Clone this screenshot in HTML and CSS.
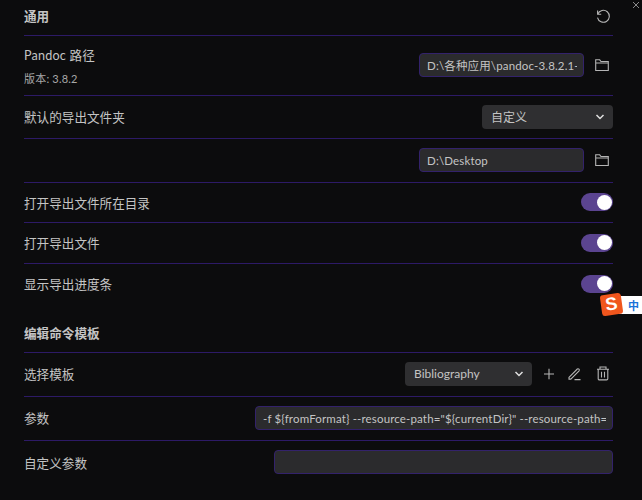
FILE: index.html
```html
<!DOCTYPE html>
<html lang="zh-CN">
<head>
    <meta charset="UTF-8">
    <meta name="viewport" content="width=device-width, initial-scale=1.0">
    <title>导出设置</title>
    <link rel="stylesheet" href="styles.css">
</head>
<body>
    <svg class="close-x" width="8" height="8" viewBox="0 0 8 8"><path d="M1 1l6 6M7 1l-6 6"/></svg>

    <div class="settings">
        <div class="row heading first-heading">
            <span>通用</span>
            <svg class="icon reset-icon" width="16" height="16" viewBox="0 0 16 16"><path d="M2.6 2.6v3.6h3.6"/><path d="M2.8 6a6 6 0 1 1-.3 3.6"/></svg>
        </div>

        <div class="row pandoc-row">
            <div class="label-stack">
                <span>Pandoc 路径</span>
                <span class="sub">版本: 3.8.2</span>
            </div>
            <div class="controls">
                <div class="field path-field"><div class="field-text">D:\各种应用\pandoc-3.8.2.1-windows</div></div>
                <svg class="icon" width="16" height="16" viewBox="0 0 16 16"><path d="M1.7 13.5V2.8h4l1.3 1.7h7.3v9zM1.7 6h12.6"/></svg>
            </div>
        </div>

        <div class="row select-row">
            <span>默认的导出文件夹</span>
            <div class="select custom-select">自定义
                <svg class="chevron" width="10" height="6" viewBox="0 0 10 6"><path d="M1.5 1l3.5 3.5L8.5 1"/></svg>
            </div>
        </div>

        <div class="row folder-row">
            <span></span>
            <div class="controls">
                <div class="field path-field"><div class="field-text">D:\Desktop</div></div>
                <svg class="icon" width="16" height="16" viewBox="0 0 16 16"><path d="M1.7 13.5V2.8h4l1.3 1.7h7.3v9zM1.7 6h12.6"/></svg>
            </div>
        </div>

        <div class="row toggle-row">
            <span>打开导出文件所在目录</span>
            <div class="toggle"><div class="knob"></div></div>
        </div>
        <div class="row toggle-row tall">
            <span>打开导出文件</span>
            <div class="toggle"><div class="knob"></div></div>
        </div>
        <div class="row toggle-row tall no-line">
            <span>显示导出进度条</span>
            <div class="toggle"><div class="knob"></div></div>
        </div>

        <div class="row heading second-heading">
            <span>编辑命令模板</span>
        </div>

        <div class="row select-row tmpl-row">
            <span>选择模板</span>
            <div class="controls tmpl-controls">
                <div class="select tmpl-select">Bibliography
                    <svg class="chevron" width="10" height="6" viewBox="0 0 10 6"><path d="M1.5 1l3.5 3.5L8.5 1"/></svg>
                </div>
                <svg class="icon" width="10" height="12" viewBox="0 0 10 12"><path d="M5 .8v10.4M0 6h10"/></svg>
                <svg class="icon" width="15" height="15" viewBox="0 0 15 15"><path d="M3 11.3L11.3 3a1.3 1.3 0 0 1 1.8 1.8L4.8 13.1H3zM8.5 13.6h6"/></svg>
                <svg class="icon" width="16" height="15" viewBox="0 0 16 15"><path d="M4 3.2h12M7 3V1h6v2M5.2 3.2v9.5a1.2 1.2 0 0 0 1.2 1.2h7.2a1.2 1.2 0 0 0 1.2-1.2V3.2M8.5 5.8v5.6M11.5 5.8v5.6"/></svg>
            </div>
        </div>

        <div class="row args-row">
            <span>参数</span>
            <div class="field args-field"><div class="field-text">-f ${fromFormat} --resource-path="${currentDir}" --resource-path="${currentDir}/assets"</div></div>
        </div>

        <div class="row args-row no-line">
            <span>自定义参数</span>
            <div class="field custom-field"></div>
        </div>
    </div>

    <div class="ime-badge">
        <span class="ime-text">中</span>
        <div class="ime-logo">S</div>
    </div>
</body>
</html>
```

FILE: styles.css
```css
body {
    margin: 0;
    height: 500px;
    overflow: hidden;
    background-color: #0c0c0d;
    color: #c4c4c4;
    font-family: "Lato", "Noto Sans CJK SC", sans-serif;
    font-size: 12.6px;
}

.settings {
    padding: 0 29px 0 24px;
}

.row {
    display: flex;
    justify-content: space-between;
    align-items: center;
    box-sizing: border-box;
    padding-bottom: 1px;
    border-bottom: 1px solid #2d1a66;
}

.no-line {
    border-bottom: none;
    padding-bottom: 2px;
}

.heading {
    font-weight: 700;
    font-size: 12.6px;
}

.first-heading {
    height: 36px;
    padding-bottom: 4px;
}

.second-heading {
    height: 48px;
    padding-top: 8px;
}

.pandoc-row {
    height: 60px;
}

.select-row {
    height: 43px;
}

.folder-row {
    height: 44px;
}

.toggle-row {
    height: 40px;
}

.tall {
    height: 41px;
}

.tmpl-row {
    height: 44px;
    padding-bottom: 2px;
}

.args-row {
    height: 44px;
    padding-bottom: 2px;
}

.label-stack {
    display: flex;
    flex-direction: column;
    gap: 6px;
    letter-spacing: 0.2px;
}

.sub {
    font-size: 11px;
    color: #a8a8a8;
}

.controls {
    display: flex;
    align-items: center;
    gap: 10px;
    margin-right: 3px;
}

.icon {
    fill: none;
    stroke: #b5b5b5;
    stroke-width: 1.1;
}

.reset-icon {
    margin-right: 2px;
}

.field {
    box-sizing: border-box;
    height: 24px;
    line-height: 23px;
    padding: 0 6px 0 7px;
    background-color: #2b2b2d;
    border: 1px solid #33226b;
    border-radius: 4px;
    font-size: 11.5px;
    letter-spacing: 0.15px;
}

.field-text {
    white-space: nowrap;
    overflow: hidden;
}

.path-field {
    width: 165px;
}

.args-field {
    width: 358px;
}

.custom-field {
    width: 339px;
}

.select {
    box-sizing: border-box;
    display: flex;
    justify-content: space-between;
    align-items: center;
    height: 24px;
    padding: 0 8px 0 9px;
    background-color: #2f2f31;
    border-radius: 4px;
    font-size: 12px;
}

.custom-select {
    width: 131px;
}

.tmpl-select {
    width: 127px;
}

.tmpl-controls {
    gap: 12px;
    margin-right: 4px;
}

.chevron {
    fill: none;
    stroke: #e0e0e0;
    stroke-width: 1.5;
}

.toggle {
    display: flex;
    justify-content: flex-end;
    align-items: center;
    box-sizing: border-box;
    width: 32px;
    height: 18px;
    padding: 0 1px;
    border-radius: 9px;
    background-color: #5b4490;
}

.knob {
    width: 15px;
    height: 15px;
    border-radius: 50%;
    background-color: #fff;
}

.close-x {
    position: absolute;
    top: 1px;
    right: 2px;
    fill: none;
    stroke: #8a8a8a;
    stroke-width: 1;
}

.ime-badge {
    position: absolute;
    left: 618px;
    top: 296px;
    width: 24px;
    height: 18px;
    background-color: #fff;
    display: flex;
    justify-content: flex-end;
    align-items: center;
}

.ime-logo {
    position: absolute;
    left: -17px;
    top: -2px;
    width: 21px;
    height: 21px;
    background-color: #f0561d;
    border-radius: 3px;
    transform: rotate(-8deg);
    color: #fff;
    font: 700 18px/21px "Liberation Sans", sans-serif;
    text-align: center;
}

.ime-text {
    margin-right: 3px;
    color: #1a73d9;
    font: 700 11px "Noto Sans CJK SC", sans-serif;
}
```
